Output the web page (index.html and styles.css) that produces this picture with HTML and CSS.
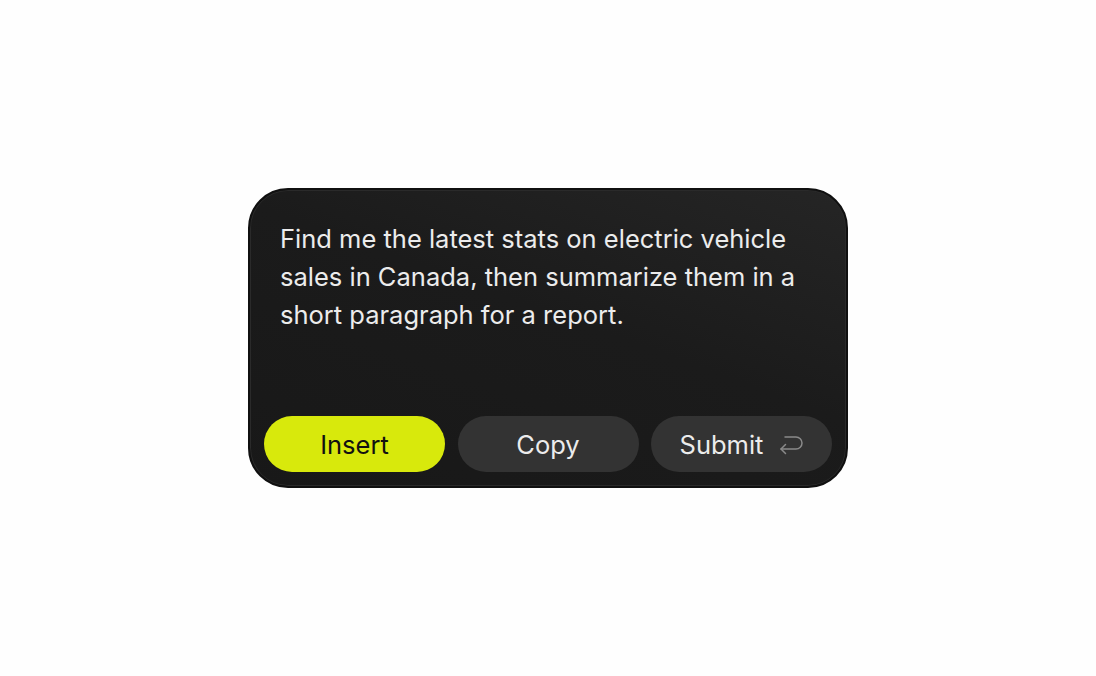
FILE: index.html
```html
<!DOCTYPE html>
<html>
<head>
<meta charset="utf-8">
<link rel="stylesheet" href="styles.css">
</head>
<body>
<div class="stage">
  <div class="card">
    <p class="prompt">Find me the latest stats on electric vehicle sales in Canada, then summarize them in a short paragraph for a report.</p>
    <div class="actions">
      <button class="btn btn-primary">Insert</button>
      <button class="btn">Copy</button>
      <button class="btn btn-submit">Submit
        <svg class="enter" viewBox="0 0 24 24" width="24" height="24" fill="none" stroke="currentColor" stroke-width="1.5" stroke-linecap="round" stroke-linejoin="round"><path d="M6 4H17a6 6 0 0 1 0 12H2"/><path d="M6.5 11.5L2 16l4.5 4.5"/></svg>
      </button>
    </div>
  </div>
</div>
</body>
</html>
```
FILE: styles.css
```css
html, body {
  margin: 0;
  padding: 0;
  background: #fefefe;
}
.stage {
  width: 1096px;
  height: 676px;
  display: flex;
  justify-content: center;
  align-items: flex-start;
  padding-top: 188px;
  box-sizing: border-box;
  font-family: Inter, "Noto Sans", sans-serif;
}
.card {
  width: 600px;
  height: 300px;
  box-sizing: border-box;
  border: 2px solid #101010;
  box-shadow: inset 0 0 0 1px #2a2a2a;
  border-radius: 40px;
  background: linear-gradient(200deg, #252525 0%, #1b1b1b 45%, #181818 100%);
  display: flex;
  flex-direction: column;
  justify-content: space-between;
  padding: 30px 14px 14px 14px;
}
.prompt {
  margin: 0;
  padding: 0 16px;
  color: #ececec;
  font-size: 25.5px;
  line-height: 38px;
}
.actions {
  display: grid;
  grid-template-columns: 181px 181px 181px;
  column-gap: 12.5px;
}
.btn {
  height: 56px;
  border: none;
  border-radius: 28px;
  background: #333333;
  color: #ececec;
  font-family: Inter, "Noto Sans", sans-serif;
  font-size: 25.5px;
  display: flex;
  align-items: center;
  justify-content: center;
  gap: 16px;
  padding: 0;
}
.btn-primary {
  background: #d8e90c;
  color: #111111;
}
.enter {
  color: #8a8a8a;
  width: 24px;
  height: 24px;
  flex: none;
  position: relative;
  top: 1px;
}
```
